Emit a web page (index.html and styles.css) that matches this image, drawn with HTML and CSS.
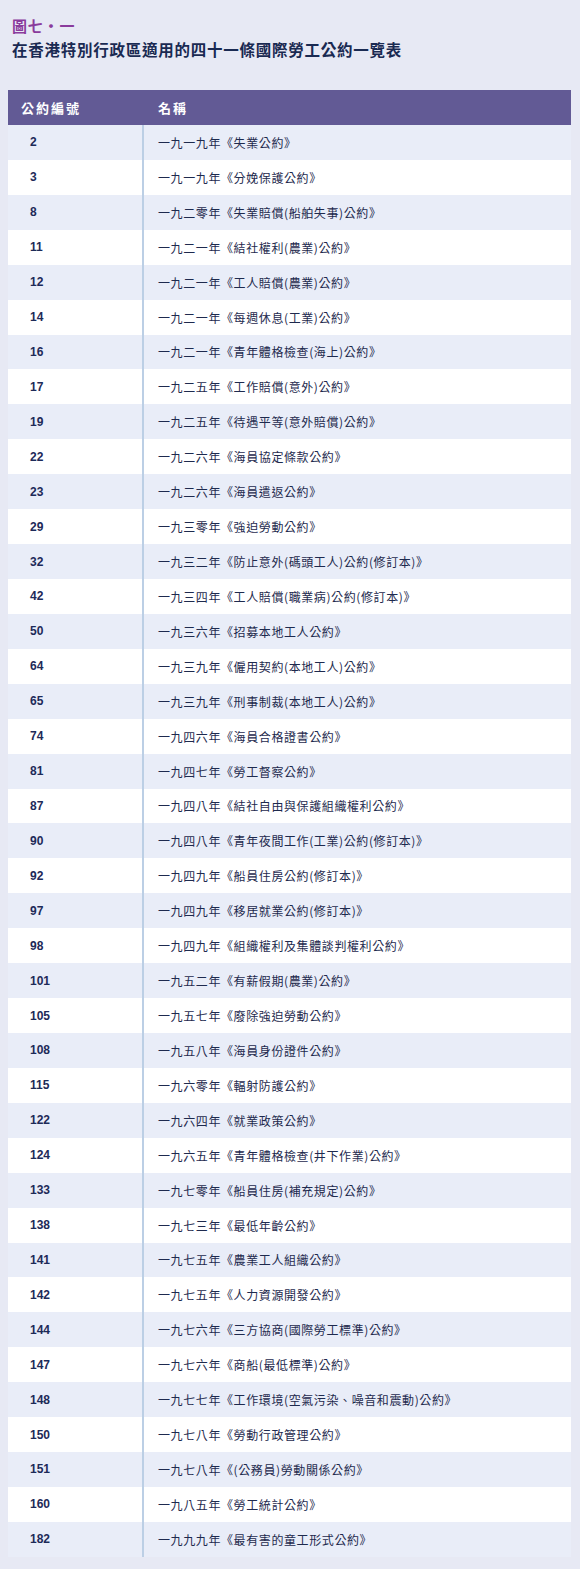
FILE: index.html
```html
<!DOCTYPE html>
<html lang="zh-Hant">
<head>
<meta charset="utf-8">
<title>圖七・一</title>
<link rel="stylesheet" href="styles.css">
</head>
<body>
<div class="page">
  <div class="fig-label">圖七・一</div>
  <h1 class="fig-title">在香港特別行政區適用的四十一條國際勞工公約一覽表</h1>
  <div class="table">
    <div class="row head"><div class="c1">公約編號</div><div class="c2">名稱</div></div>
    <div class="row"><div class="c1">2</div><div class="c2">一九一九年《失業公約》</div></div>
    <div class="row"><div class="c1">3</div><div class="c2">一九一九年《分娩保護公約》</div></div>
    <div class="row"><div class="c1">8</div><div class="c2">一九二零年《失業賠償(船舶失事)公約》</div></div>
    <div class="row"><div class="c1">11</div><div class="c2">一九二一年《結社權利(農業)公約》</div></div>
    <div class="row"><div class="c1">12</div><div class="c2">一九二一年《工人賠償(農業)公約》</div></div>
    <div class="row"><div class="c1">14</div><div class="c2">一九二一年《每週休息(工業)公約》</div></div>
    <div class="row"><div class="c1">16</div><div class="c2">一九二一年《青年體格檢查(海上)公約》</div></div>
    <div class="row"><div class="c1">17</div><div class="c2">一九二五年《工作賠償(意外)公約》</div></div>
    <div class="row"><div class="c1">19</div><div class="c2">一九二五年《待遇平等(意外賠償)公約》</div></div>
    <div class="row"><div class="c1">22</div><div class="c2">一九二六年《海員協定條款公約》</div></div>
    <div class="row"><div class="c1">23</div><div class="c2">一九二六年《海員遣返公約》</div></div>
    <div class="row"><div class="c1">29</div><div class="c2">一九三零年《強迫勞動公約》</div></div>
    <div class="row"><div class="c1">32</div><div class="c2">一九三二年《防止意外(碼頭工人)公約(修訂本)》</div></div>
    <div class="row"><div class="c1">42</div><div class="c2">一九三四年《工人賠償(職業病)公約(修訂本)》</div></div>
    <div class="row"><div class="c1">50</div><div class="c2">一九三六年《招募本地工人公約》</div></div>
    <div class="row"><div class="c1">64</div><div class="c2">一九三九年《僱用契約(本地工人)公約》</div></div>
    <div class="row"><div class="c1">65</div><div class="c2">一九三九年《刑事制裁(本地工人)公約》</div></div>
    <div class="row"><div class="c1">74</div><div class="c2">一九四六年《海員合格證書公約》</div></div>
    <div class="row"><div class="c1">81</div><div class="c2">一九四七年《勞工督察公約》</div></div>
    <div class="row"><div class="c1">87</div><div class="c2">一九四八年《結社自由與保護組織權利公約》</div></div>
    <div class="row"><div class="c1">90</div><div class="c2">一九四八年《青年夜間工作(工業)公約(修訂本)》</div></div>
    <div class="row"><div class="c1">92</div><div class="c2">一九四九年《船員住房公約(修訂本)》</div></div>
    <div class="row"><div class="c1">97</div><div class="c2">一九四九年《移居就業公約(修訂本)》</div></div>
    <div class="row"><div class="c1">98</div><div class="c2">一九四九年《組織權利及集體談判權利公約》</div></div>
    <div class="row"><div class="c1">101</div><div class="c2">一九五二年《有薪假期(農業)公約》</div></div>
    <div class="row"><div class="c1">105</div><div class="c2">一九五七年《廢除強迫勞動公約》</div></div>
    <div class="row"><div class="c1">108</div><div class="c2">一九五八年《海員身份證件公約》</div></div>
    <div class="row"><div class="c1">115</div><div class="c2">一九六零年《輻射防護公約》</div></div>
    <div class="row"><div class="c1">122</div><div class="c2">一九六四年《就業政策公約》</div></div>
    <div class="row"><div class="c1">124</div><div class="c2">一九六五年《青年體格檢查(井下作業)公約》</div></div>
    <div class="row"><div class="c1">133</div><div class="c2">一九七零年《船員住房(補充規定)公約》</div></div>
    <div class="row"><div class="c1">138</div><div class="c2">一九七三年《最低年齡公約》</div></div>
    <div class="row"><div class="c1">141</div><div class="c2">一九七五年《農業工人組織公約》</div></div>
    <div class="row"><div class="c1">142</div><div class="c2">一九七五年《人力資源開發公約》</div></div>
    <div class="row"><div class="c1">144</div><div class="c2">一九七六年《三方協商(國際勞工標準)公約》</div></div>
    <div class="row"><div class="c1">147</div><div class="c2">一九七六年《商船(最低標準)公約》</div></div>
    <div class="row"><div class="c1">148</div><div class="c2">一九七七年《工作環境(空氣污染、噪音和震動)公約》</div></div>
    <div class="row"><div class="c1">150</div><div class="c2">一九七八年《勞動行政管理公約》</div></div>
    <div class="row"><div class="c1">151</div><div class="c2">一九七八年《(公務員)勞動關係公約》</div></div>
    <div class="row"><div class="c1">160</div><div class="c2">一九八五年《勞工統計公約》</div></div>
    <div class="row"><div class="c1">182</div><div class="c2">一九九九年《最有害的童工形式公約》</div></div>
  </div>
</div>
</body>
</html>
```

FILE: styles.css
```css
html, body {
  margin: 0;
  padding: 0;
  background: #e7e9f4;
}
.page {
  padding: 17px 9px 12px 8px;
  font-family: "Noto Sans CJK TC", "Noto Sans", sans-serif;
  color: #1c2a50;
}
.fig-label {
  margin: 0 0 0 4px;
  font-size: 15px;
  line-height: 18px;
  font-weight: 700;
  color: #8a3b9c;
  letter-spacing: 0.8px;
}
.fig-title {
  margin: 4px 0 0 4px;
  font-size: 15.5px;
  line-height: 20px;
  font-weight: 700;
  color: #1a2a52;
  letter-spacing: 0.75px;
}
.table {
  margin-top: 31px;
  background: #fff;
}
.row {
  display: grid;
  grid-template-columns: 134px 1fr;
  height: 34.93px;
  align-items: stretch;
  font-size: 12px;
}
.row:nth-child(even) {
  background: #e9edf8;
}
.row:nth-child(odd) {
  background: #ffffff;
}
.row .c1 {
  display: flex;
  align-items: center;
  padding-left: 22px;
  font-family: "Liberation Sans", Arial, sans-serif;
  font-weight: 700;
  font-size: 12px;
  color: #1d2a58;
}
.row .c2 {
  display: flex;
  align-items: center;
  padding-left: 14px;
  border-left: 2px solid #bccfe5;
  letter-spacing: 0.6px;
  color: #1e2a4e;
}
.row.head {
  height: 35px;
  background: #625a95;
  color: #ffffff;
}
.row.head .c1 {
  padding-left: 13px;
  font-family: "Noto Sans CJK TC", sans-serif;
  font-size: 13px;
  letter-spacing: 2px;
  color: #ffffff;
}
.row.head .c2 {
  border-left: 2px solid #625a95;
  font-size: 13px;
  font-weight: 700;
  letter-spacing: 2px;
  color: #ffffff;
}
```
